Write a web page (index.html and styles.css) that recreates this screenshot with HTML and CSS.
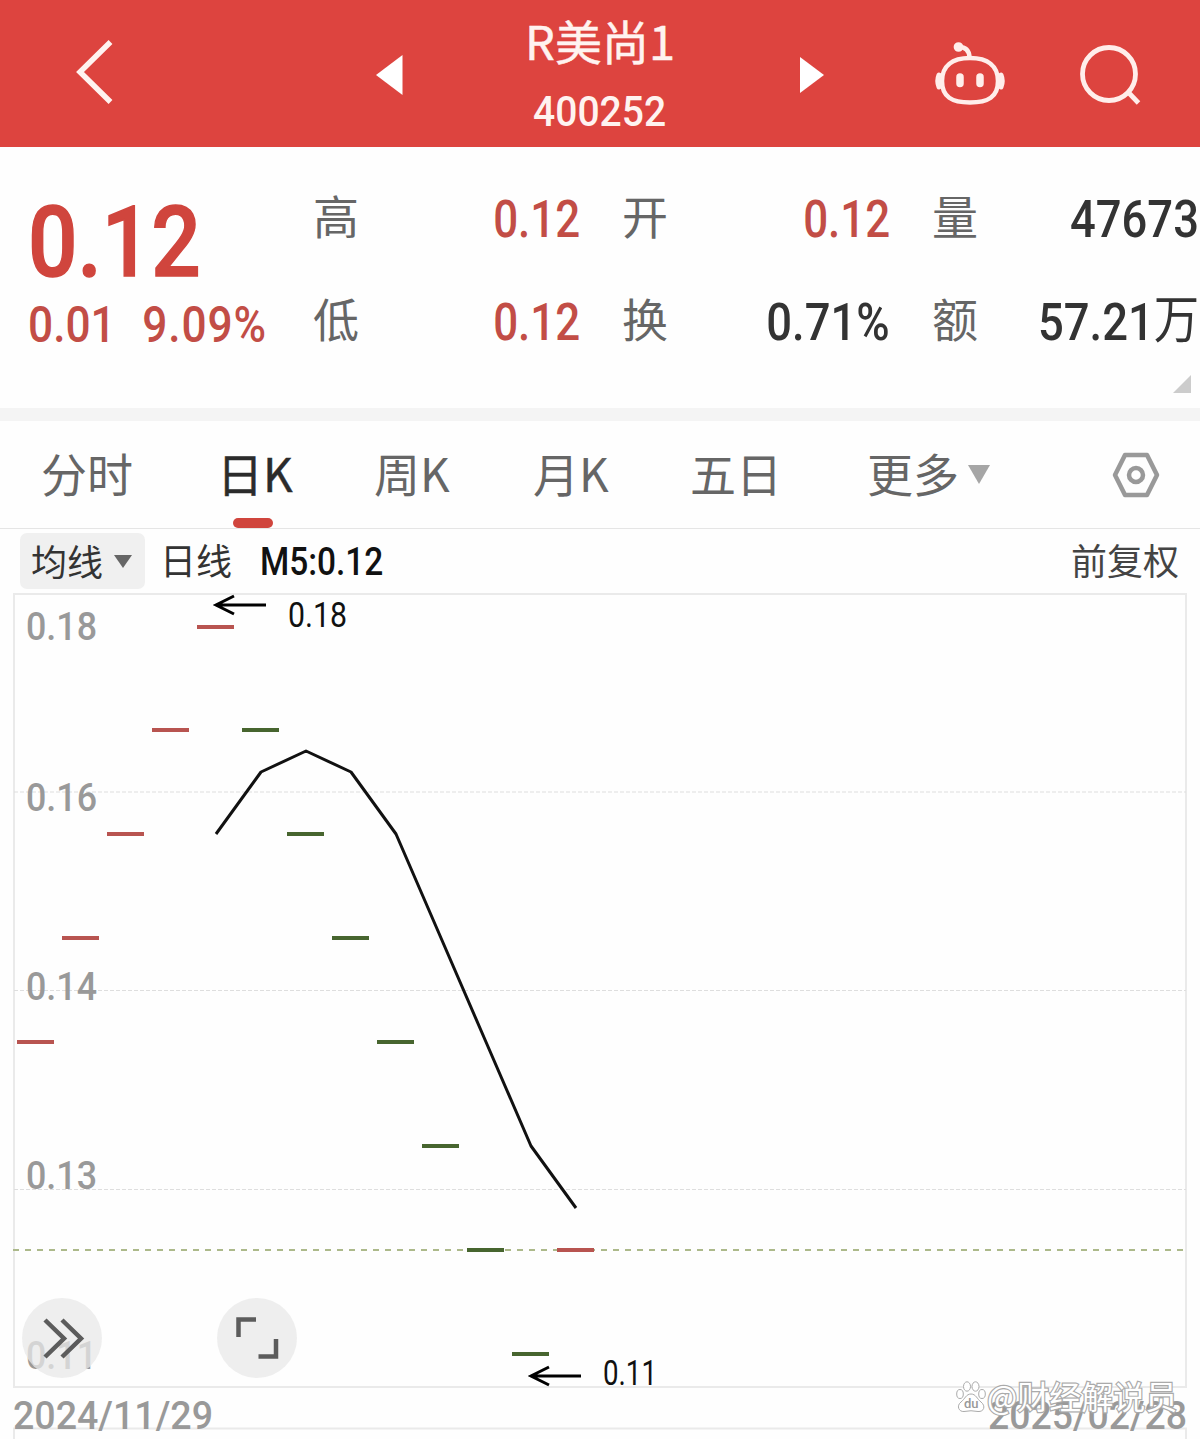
FILE: index.html
```html
<!DOCTYPE html>
<html lang="zh-CN">
<head>
<meta charset="utf-8">
<title>R美尚1 400252</title>
<link rel="stylesheet" href="styles.css">
</head>
<body>
<header class="topbar">
  <svg class="icon-back" width="44" height="72" viewBox="0 0 44 72"><path d="M39.500 6 9 36 39.500 66" fill="none" stroke="#fff3f0" stroke-width="5.500"/></svg>
  <svg class="icon-prev" width="28" height="40" viewBox="0 0 28 40"><path d="M26.500 0V40L0 20Z" fill="#fff"/></svg>
  <div class="stock">
    <h1 class="stock-name">R美尚1</h1>
    <span class="stock-code num">400252</span>
  </div>
  <svg class="icon-next" width="24" height="36" viewBox="0 0 24 36"><path d="M0 0V36L24 18Z" fill="#fff"/></svg>
  <svg class="icon-robot" width="72" height="66" viewBox="0 0 72 66" fill="none" stroke="#ffeeeb" stroke-width="4.500" stroke-linecap="round">
    <path d="M36 17C54 17 64 25 64 40C64 56 54 61.500 36 61.500C18 61.500 8 56 8 40C8 25 18 17 36 17Z"/>
    <path d="M35.500 16C35 9 31 6 25 6"/>
    <circle cx="24.500" cy="6" r="2.600" fill="#ffeeeb"/>
    <path d="M5 34Q2.500 40 5 46M67 34Q69.500 40 67 46" stroke-width="5"/>
    <path d="M26 36V42.500M46 36V42.500" stroke-width="7.500"/>
  </svg>
  <svg class="icon-search" width="64" height="64" viewBox="0 0 64 64" fill="none" stroke="#ffeeeb" stroke-width="4.800"><circle cx="31" cy="31" r="26.500"/><path d="M50 49 60.500 60"/></svg>
</header>

<section class="quote">
  <div class="price">
    <span class="last num">0.12</span>
    <div class="change"><span class="num">0.01</span><span class="num">9.09%</span></div>
  </div>
  <dl class="stats">
    <div class="stat"><dt>高</dt><dd class="num up">0.12</dd></div>
    <div class="stat"><dt>开</dt><dd class="num up">0.12</dd></div>
    <div class="stat"><dt>量</dt><dd class="num">47673</dd></div>
    <div class="stat"><dt>低</dt><dd class="num up">0.12</dd></div>
    <div class="stat"><dt>换</dt><dd class="num">0.71%</dd></div>
    <div class="stat"><dt>额</dt><dd class="num">57.21<span class="unit">万</span></dd></div>
  </dl>
  <svg class="expand" width="18" height="18" viewBox="0 0 18 18"><path d="M18 0V18H0Z" fill="#ccc"/></svg>
</section>

<nav class="tabs">
  <a class="tab">分时</a>
  <a class="tab active">日K</a>
  <a class="tab">周K</a>
  <a class="tab">月K</a>
  <a class="tab">五日</a>
  <a class="tab more">更多<svg width="22" height="19" viewBox="0 0 22 19"><path d="M0 0H22L11 19Z" fill="#a6a6a6"/></svg></a>
  <svg class="settings" width="50" height="46" viewBox="0 0 50 46" fill="none" stroke="#999" stroke-width="4.500" stroke-linejoin="round"><path d="M14 3H36L46 23L36 43H14L4 23Z"/><circle cx="25" cy="23" r="7"/></svg>
</nav>

<div class="indicators">
  <button class="ma"><span>均线</span><svg width="18" height="13" viewBox="0 0 18 13"><path d="M0 0H18L9 13Z" fill="#666"/></svg></button>
  <span class="period">日线</span>
  <span class="ma5 num">M5:0.12</span>
  <span class="adjust">前复权</span>
</div>

<main class="chart">
  <svg class="plot" width="1200" height="849" viewBox="0 590 1200 849">
    <g class="frame"><path d="M14 594H1186V1387H14Z"/><path d="M14 1439V1428.500H1186V1439"/></g>
    <path class="grid" d="M14 792H1186M14 990.500H1186M14 1189.500H1186"/>
    <path class="current" d="M13 1250H1186"/>
    <g class="axis">
      <text x="26" y="640" textLength="71" lengthAdjust="spacingAndGlyphs">0.18</text>
      <text x="26" y="811" textLength="71" lengthAdjust="spacingAndGlyphs">0.16</text>
      <text x="26" y="1000" textLength="71" lengthAdjust="spacingAndGlyphs">0.14</text>
      <text x="26" y="1189" textLength="71" lengthAdjust="spacingAndGlyphs">0.13</text>
      <text x="26" y="1369" textLength="71" lengthAdjust="spacingAndGlyphs">0.11</text>
      <text x="13" y="1429" textLength="200" lengthAdjust="spacingAndGlyphs">2024/11/29</text>
      <text x="988" y="1429" textLength="199" lengthAdjust="spacingAndGlyphs">2025/02/28</text>
    </g>
    <path class="rise" d="M17 1042h37M62 938h37M107 834h37M152 730h37M197 627h37M557 1250h37"/>
    <path class="fall" d="M242 730h37M287 834h37M332 938h37M377 1042h37M422 1146h37M467 1250h37M512 1354h37"/>
    <path class="average" d="M216 834 261 772 306 751 351 772 396 834 441 938 486 1042 531 1146 576 1208"/>
    <path class="arrow" d="M266 605H216M234 596 216 605 234 614M581 1376H531M549 1367 531 1376 549 1385"/>
    <g class="mark">
      <text x="288" y="627" textLength="59" lengthAdjust="spacingAndGlyphs">0.18</text>
      <text x="603" y="1385" textLength="54" lengthAdjust="spacingAndGlyphs">0.11</text>
    </g>
  </svg>
  <button class="fab fab-more"><svg width="80" height="80" viewBox="0 0 80 80"><path d="M23 22 42 40.500 23 59M40 22 59 40.500 40 59"/></svg></button>
  <button class="fab fab-full"><svg width="80" height="80" viewBox="0 0 80 80"><path d="M21.500 39V21.500H39M59 41V58.500H41.500"/></svg></button>
  <div class="watermark">
    <svg width="30" height="32" viewBox="0 0 30 32" fill="#fff" stroke="#aaa" stroke-width="1"><ellipse cx="4" cy="13" rx="3.300" ry="4.500"/><ellipse cx="11" cy="5.500" rx="3.500" ry="4.700"/><ellipse cx="19.500" cy="5.500" rx="3.500" ry="4.700"/><ellipse cx="26" cy="13" rx="3.300" ry="4.500"/><path d="M15 13C10 13 9 18 5 21C0 25 3 31 8 30.500Q15 29 22 30.500C28 31 30 25 25 21C21 18 20 13 15 13Z"/><text class="du" x="8" y="27">du</text></svg>
    <span class="author">@财经解说员</span>
  </div>
</main>
</body>
</html>
```
FILE: styles.css
```css
* { box-sizing: border-box; }
body {
  margin: 0;
  width: 1200px;
  height: 1439px;
  overflow: hidden;
  display: flex;
  flex-direction: column;
  background: #fefefe;
  color: #333;
  font-family: "Noto Sans CJK SC", sans-serif;
}
svg { display: block; flex: none; }
button { border: 0; padding: 0; font: inherit; color: inherit; }
.num {
  font-family: Roboto, "Noto Sans CJK SC", sans-serif;
  font-weight: 500;
  white-space: nowrap;
}

.topbar {
  height: 147px;
  flex: none;
  display: grid;
  grid-template-columns: 376px 124px 200px 100px 134px 144px 1fr;
  background: #dd443f;
  color: #fff3f0;
}
.topbar > * { grid-row: 1; }
.icon-back { grid-column: 1; margin: 36px 0 0 71px; }
.icon-prev { grid-column: 2; margin-top: 55px; }
.icon-next { grid-column: 5; margin-top: 57px; }
.icon-robot { grid-column: 6; margin-top: 41px; }
.icon-search { grid-column: 7; margin-top: 43px; }
.stock { grid-column: 3; display: flex; flex-direction: column; align-items: center; }
.stock-name { margin: 8px 0 0; font-size: 47px; line-height: 64px; font-weight: 400; white-space: nowrap; -webkit-text-stroke: .5px #fff3f0; }
.stock-code { margin-top: 16px; font-size: 42px; line-height: 48px; transform: scaleX(.93); }

.quote {
  height: 274px;
  flex: none;
  display: flex;
  position: relative;
  border-bottom: 13px solid #f4f4f4;
}
.price { width: 313px; padding: 45px 0 0 28px; color: #d0453d; }
.last { display: block; font-size: 99px; line-height: 100px; transform: scaleX(.88); transform-origin: left; -webkit-text-stroke: 1.500px #d0453d; }
.change { display: flex; gap: 30px; margin-top: 4px; font-size: 50px; line-height: 58px; transform: scaleX(.885); transform-origin: left; color: #c24d46; }
.change .num + .num { letter-spacing: 1px; }
.stats {
  margin: 19px 0 0;
  height: 206px;
  display: grid;
  grid-template-columns: 267px 268px 267px;
  grid-template-rows: 103px 103px;
  column-gap: 42px;
}
.stat { display: flex; justify-content: space-between; align-items: center; font-size: 46px; line-height: 60px; }
.stat dt { margin-bottom: 7px; color: #666; }
.stat dd { margin: 5px 0 0; font-size: 51px; transform: scaleX(.89); transform-origin: right; }
.stat .up { color: #c24d46; transform: scaleX(.86); }
.unit { position: relative; top: -2px; font-size: 51px; font-weight: 400; line-height: 50px; }
.expand { position: absolute; right: 9px; bottom: 15px; }

.tabs {
  height: 108px;
  flex: none;
  display: grid;
  grid-template-columns: 176px 157px 159px 157px 177px 244px 50px;
  padding-left: 41px;
  border-bottom: 1px solid #e5e5e5;
  font-size: 46px;
  line-height: 102px;
  color: #666;
}
.tab { white-space: nowrap; }
.active { position: relative; color: #2b2b2b; -webkit-text-stroke: .4px #2b2b2b; }
.active::after { content: ""; position: absolute; left: 16px; bottom: 0; width: 40px; height: 10px; border-radius: 5px; background: #d0453d; }
.more { display: flex; gap: 9px; }
.more svg { margin-top: 44px; }
.settings { margin-top: 31px; }

.indicators { height: 61px; flex: none; display: flex; padding: 4px 20px 0; font-size: 36px; line-height: 52px; }
.ma { width: 125px; height: 56px; padding-left: 11px; display: flex; align-items: center; gap: 11px; border-radius: 7px; background: #f0f0f0; }
.ma span { margin-bottom: 3px; }
.period { margin-left: 15px; }
.ma5 { margin-left: 28px; font-size: 38px; line-height: 58px; color: #111; transform: scaleX(.88); transform-origin: left; }
.adjust { margin-left: auto; margin-right: 1px; color: #444; }

.chart { position: relative; height: 849px; flex: none; }
.plot { font-family: Roboto, sans-serif; }
.plot path { fill: none; }
.frame { stroke: #eaeaea; stroke-width: 2; }
.grid { stroke: #dedede; stroke-width: 1; stroke-dasharray: 4 2; }
.current { stroke: #acb98a; stroke-width: 2; stroke-dasharray: 6 6; }
.axis { font-size: 39px; font-weight: 500; fill: #999; }
.mark { font-size: 35px; fill: #111; }
.rise { stroke: #b85450; stroke-width: 4; }
.fall { stroke: #47652f; stroke-width: 4; }
.average { stroke: #111; stroke-width: 3; stroke-linejoin: round; }
.arrow { stroke: #000; stroke-width: 3; }
.fab { position: absolute; top: 708px; width: 80px; height: 80px; border-radius: 50%; background: rgba(232, 232, 232, .75); }
.fab-more { left: 22px; }
.fab-full { left: 217px; }
.fab path { fill: none; stroke: #5c5c5c; stroke-width: 4.500; }
.watermark { position: absolute; left: 956px; top: 791px; display: flex; align-items: center; gap: 1px; }
.author { margin-top: -4px; font-size: 32px; line-height: 36px; color: #fff; -webkit-text-stroke: 2.400px #aaa; paint-order: stroke fill; white-space: nowrap; }
.du { font: 500 13px Roboto, sans-serif; fill: #999; stroke: none; }
```
